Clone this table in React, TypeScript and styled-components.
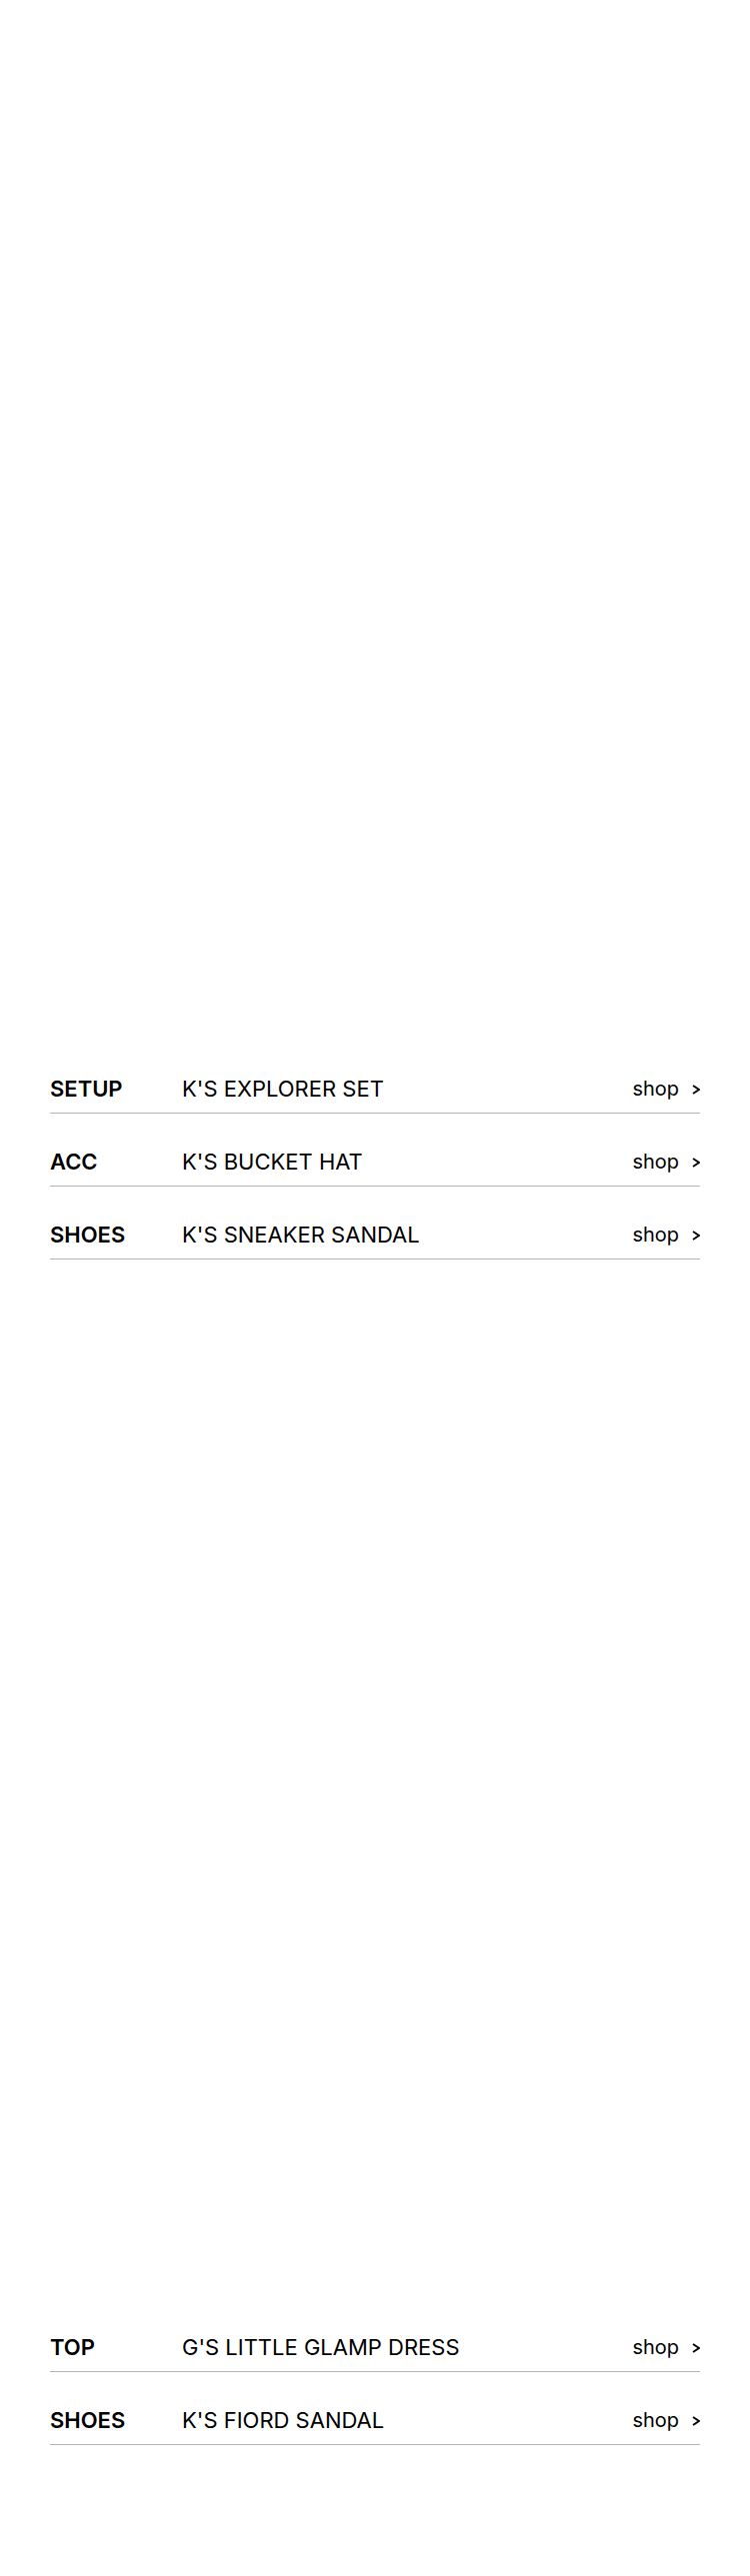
import React from 'react'
import styled, { createGlobalStyle } from 'styled-components'

const GlobalStyle = createGlobalStyle`
    html, body {
        margin: 0;
        padding: 0;
        background: #fff;
    }

    body {
        font-family: Inter, 'Noto Sans', sans-serif;
        color: #000;
    }
`

const Page = styled.div`
    width: 750px;
    min-height: 2577px;
    padding-bottom: 130px;
    box-sizing: border-box;
    display: flex;
    flex-direction: column;
`

const Visual = styled.div<{ $h: number }>`
    height: ${p => p.$h}px;
    background: #fff;
`

const ItemList = styled.ul`
    list-style: none;
    margin: 0;
    padding: 0 50px;
`

const ItemRow = styled.li`
    display: flex;
    align-items: baseline;
    padding: 33px 0 9px;
    border-bottom: 1px solid #b4b4b4;
    line-height: 30px;
`

const Category = styled.span`
    flex: 0 0 132px;
    font-size: 22px;
    font-weight: 600;
`

const ProductName = styled.span`
    flex: 1;
    font-size: 22px;
    font-weight: 400;
`

const ShopLink = styled.a`
    display: flex;
    align-items: center;
    column-gap: 13px;
    font-size: 20px;
    color: #000;
    text-decoration: none;
    align-self: center;

    svg {
        width: 8px;
        height: 10px;
        margin-top: 1px;
    }
`

type Item = {
    category: string;
    name: string;
}

const firstLook: Item[] = [
    { category: 'SETUP', name: "K'S EXPLORER SET" },
    { category: 'ACC', name: "K'S BUCKET HAT" },
    { category: 'SHOES', name: "K'S SNEAKER SANDAL" },
]

const secondLook: Item[] = [
    { category: 'TOP', name: "G'S LITTLE GLAMP DRESS" },
    { category: 'SHOES', name: "K'S FIORD SANDAL" },
]

const Chevron = () => (
    <svg viewBox="0 0 8 10" fill="none">
        <polyline points="1,1 7,5 1,9" stroke="#000" strokeWidth="1.8" />
    </svg>
)

const LookItems = ({ items }: { items: Item[] }) => (
    <ItemList>
        {items.map((item, i) => (
            <ItemRow key={i}>
                <Category>{item.category}</Category>
                <ProductName>{item.name}</ProductName>
                <ShopLink href="#">
                    shop
                    <Chevron />
                </ShopLink>
            </ItemRow>
        ))}
    </ItemList>
)

export default function App() {
    return (
        <>
            <GlobalStyle />
            <Page>
                <Visual $h={1041} />
                <LookItems items={firstLook} />
                <Visual $h={1040} />
                <LookItems items={secondLook} />
            </Page>
        </>
    )
}
